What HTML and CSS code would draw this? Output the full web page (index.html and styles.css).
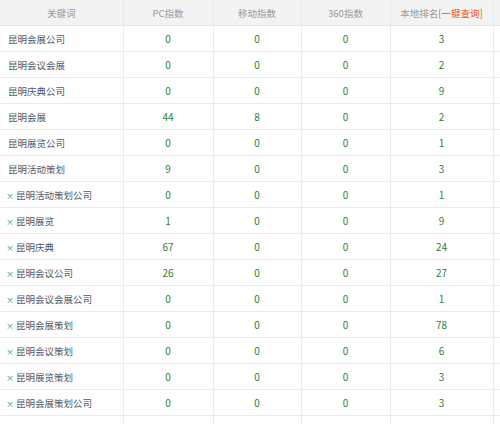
FILE: index.html
```html
<!DOCTYPE html>
<html>
<head>
<meta charset="utf-8">
<link rel="stylesheet" href="styles.css">
</head>
<body>
<table class="kw">
<colgroup>
<col class="c1"><col class="c2"><col class="c3"><col class="c4"><col class="c5"><col class="c6">
</colgroup>
<thead>
<tr><th>关键词</th><th>PC指数</th><th>移动指数</th><th>360指数</th><th>本地排名<a class="q">[一键查询]</a></th><th></th></tr>
</thead>
<tbody>
<tr><td class="k">昆明会展公司</td><td>0</td><td>0</td><td>0</td><td>3</td><td></td></tr>
<tr><td class="k">昆明会议会展</td><td>0</td><td>0</td><td>0</td><td>2</td><td></td></tr>
<tr><td class="k">昆明庆典公司</td><td>0</td><td>0</td><td>0</td><td>9</td><td></td></tr>
<tr><td class="k">昆明会展</td><td>44</td><td>8</td><td>0</td><td>2</td><td></td></tr>
<tr><td class="k">昆明展览公司</td><td>0</td><td>0</td><td>0</td><td>1</td><td></td></tr>
<tr><td class="k">昆明活动策划</td><td>9</td><td>0</td><td>0</td><td>3</td><td></td></tr>
<tr><td class="k x"><span class="m">×</span>昆明活动策划公司</td><td>0</td><td>0</td><td>0</td><td>1</td><td></td></tr>
<tr><td class="k x"><span class="m">×</span>昆明展览</td><td>1</td><td>0</td><td>0</td><td>9</td><td></td></tr>
<tr><td class="k x"><span class="m">×</span>昆明庆典</td><td>67</td><td>0</td><td>0</td><td>24</td><td></td></tr>
<tr><td class="k x"><span class="m">×</span>昆明会议公司</td><td>26</td><td>0</td><td>0</td><td>27</td><td></td></tr>
<tr><td class="k x"><span class="m">×</span>昆明会议会展公司</td><td>0</td><td>0</td><td>0</td><td>1</td><td></td></tr>
<tr><td class="k x"><span class="m">×</span>昆明会展策划</td><td>0</td><td>0</td><td>0</td><td>78</td><td></td></tr>
<tr><td class="k x"><span class="m">×</span>昆明会议策划</td><td>0</td><td>0</td><td>0</td><td>6</td><td></td></tr>
<tr><td class="k x"><span class="m">×</span>昆明展览策划</td><td>0</td><td>0</td><td>0</td><td>3</td><td></td></tr>
<tr><td class="k x"><span class="m">×</span>昆明会展策划公司</td><td>0</td><td>0</td><td>0</td><td>3</td><td></td></tr>
<tr><td class="k"></td><td></td><td></td><td></td><td></td><td></td></tr>
</tbody>
</table>
</body>
</html>
```
FILE: styles.css
```css
html, body {
  margin: 0;
  padding: 0;
  background: #fff;
  overflow: hidden;
}
.kw {
  border-collapse: collapse;
  table-layout: fixed;
  width: 510px;
  font-family: "Microsoft YaHei", "Noto Sans CJK SC", sans-serif;
  font-size: 9.5px;
}
.c1 { width: 123px; }
.c2 { width: 90px; }
.c3 { width: 88px; }
.c4 { width: 89px; }
.c5 { width: 103px; }
.c6 { width: 17px; }
.kw th {
  height: 25px;
  padding: 0;
  background: #f3f3f3;
  color: #9a9a9a;
  font-weight: normal;
  text-align: center;
  border-left: 1px solid #e8e8e8;
  border-bottom: 1px solid #e8e8e8;
}
.kw th:first-child { border-left: none; }
.kw td {
  height: 25px;
  padding: 0;
  text-align: center;
  color: #2f7f2f;
  font-size: 10px;
  border-left: 1px solid #ececec;
  border-bottom: 1px solid #ececec;
}
.kw td:first-child { border-left: none; }
.kw td.k {
  text-align: left;
  padding-left: 8px;
  font-size: 9.5px;
  color: #4f5869;
}
.kw td.x { padding-left: 6px; }
.m {
  color: #3f8f3f;
  font-size: 8px;
  margin-right: 2px;
}
.q {
  color: #e8552a;
}
```
